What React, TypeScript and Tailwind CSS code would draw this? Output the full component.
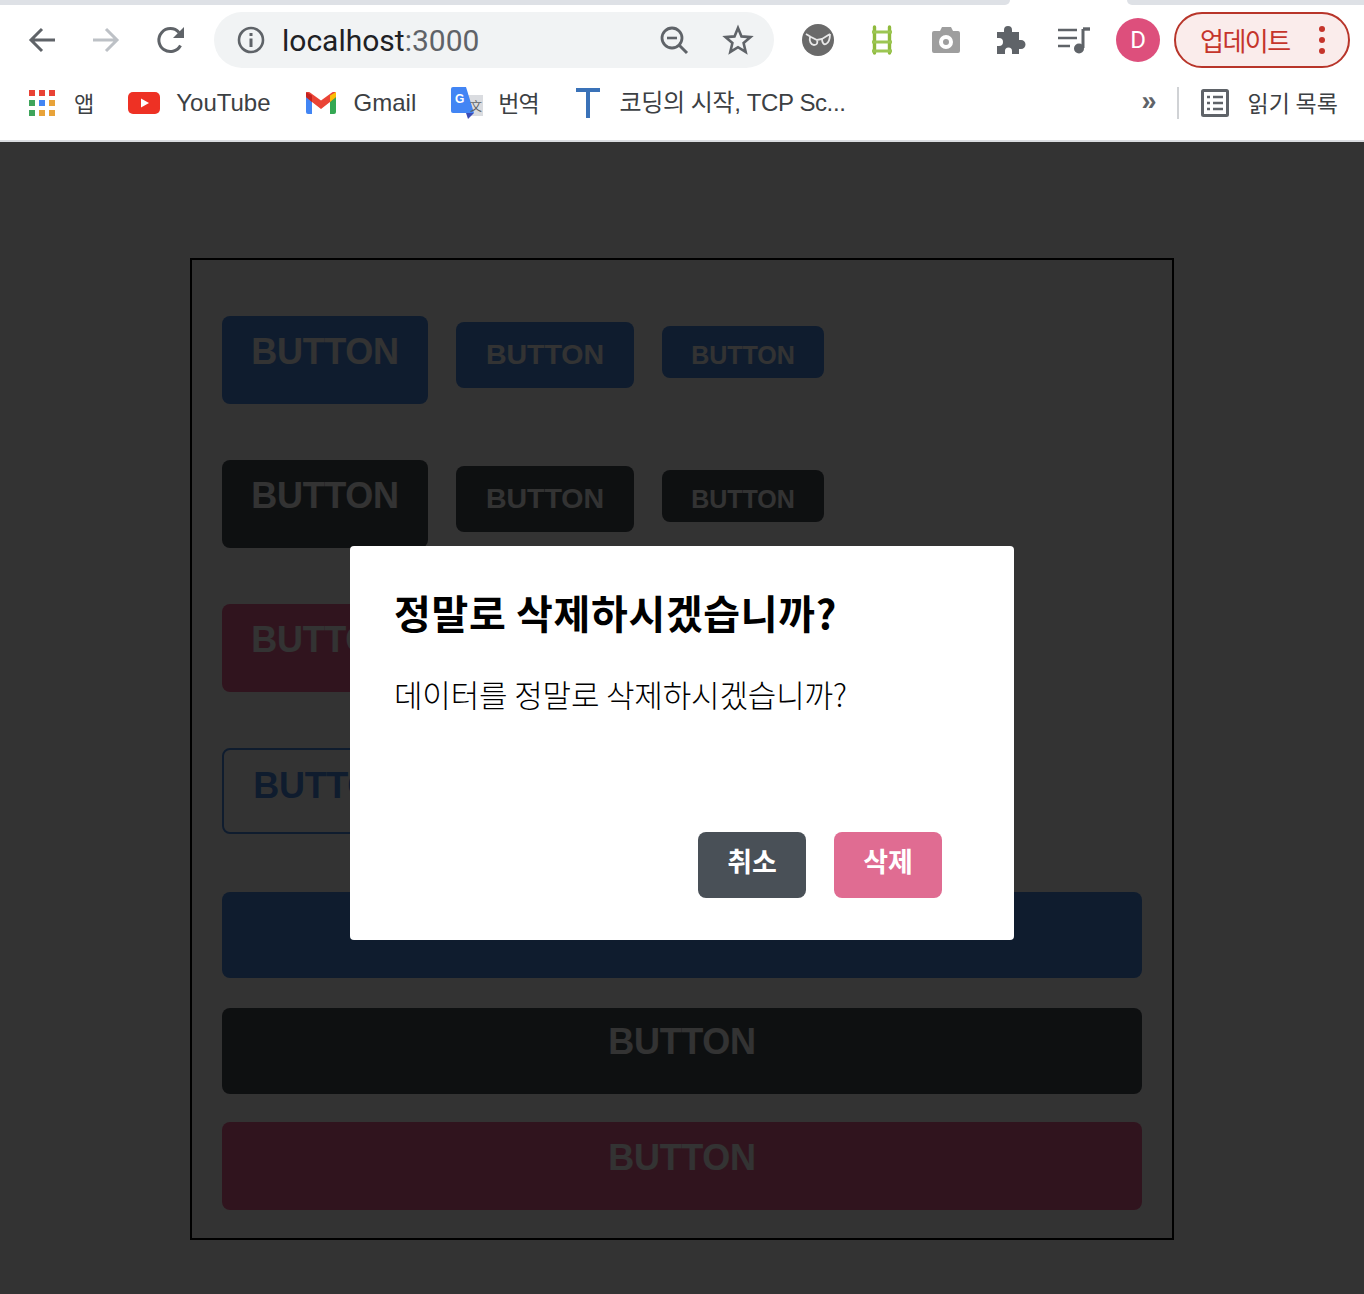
import { ReactNode } from "react";

const SANS = "font-['Liberation_Sans','Noto_Sans_CJK_KR',sans-serif]";

function ToolIcon({ className, children }: { className: string; children: ReactNode }) {
  return (
    <svg viewBox="0 0 32 32" className={`shrink-0 ${className}`} fill="none">
      {children}
    </svg>
  );
}

function BrowserChrome() {
  return (
    <header className="h-[142px] bg-white border-b-2 border-[#dadce0] text-[#3c4043]">
      {/* Tab strip */}
      <div className="flex h-[5px]">
        <div className="w-[1010px] bg-[#dee1e6] rounded-br-lg" />
        <div className="w-[117px]" />
        <div className="flex-1 bg-[#dee1e6] rounded-bl-lg" />
      </div>

      {/* Toolbar */}
      <div className="flex items-center h-[70px] pl-[26px]">
        <ToolIcon className="w-8 h-8">
          <path d="M29 16H6M16 5 5 16l11 11" stroke="#5f6368" strokeWidth="3" />
        </ToolIcon>
        <ToolIcon className="w-8 h-8 ml-[32px]">
          <path d="M3 16h23M16 5l11 11-11 11" stroke="#bdc1c6" strokeWidth="3" />
        </ToolIcon>
        <ToolIcon className="w-8 h-8 ml-[33px]">
          <path d="M25.5 21.5A11.5 11.5 0 1 1 24 8.5" stroke="#5f6368" strokeWidth="3" />
          <path d="M29 3v11H18z" fill="#5f6368" />
        </ToolIcon>

        <div className="flex items-center w-[560px] h-14 ml-[27px] pl-[21px] rounded-full bg-[#f1f3f4]">
          <ToolIcon className="w-8 h-8">
            <circle cx="16" cy="16" r="12" stroke="#5f6368" strokeWidth="2.6" />
            <path d="M16 14.5V23" stroke="#5f6368" strokeWidth="3" />
            <path d="M16 9v3" stroke="#5f6368" strokeWidth="3" />
          </ToolIcon>
          <span className="ml-[15px] mt-px text-[30px] leading-none text-[#202124] font-['Roboto',sans-serif]">
            localhost<span className="text-[#5f6368]">:3000</span>
          </span>
          <ToolIcon className="w-8 h-8 ml-auto">
            <circle cx="14" cy="14" r="10" stroke="#5f6368" strokeWidth="2.8" />
            <path d="m21 21 8 8" stroke="#5f6368" strokeWidth="3" />
            <path d="M9 14h10" stroke="#5f6368" strokeWidth="2.6" />
          </ToolIcon>
          <ToolIcon className="w-8 h-8 ml-[32px] mr-[20px]">
            <path
              d="m16 4 3.5 8.4 9 .7-6.9 5.9 2.1 8.9-7.7-4.7-7.7 4.7 2.1-8.9L3.500 13.100l9-.7z"
              stroke="#5f6368"
              strokeWidth="2.6"
            />
          </ToolIcon>
        </div>

        {/* Extensions */}
        <ToolIcon className="w-8 h-8 ml-[28px]">
          <circle cx="16" cy="16" r="16" fill="#6a6a6a" />
          <path
            d="M4 10l5 3 6 3 5-1 8-5M8 13c-1 4 1 8 4 8s4-2 3-5M20 15c0 4 2 6 4 5s4-4 4-10"
            stroke="#e8e8e8"
            strokeWidth="1.800"
          />
        </ToolIcon>
        <ToolIcon className="w-8 h-8 ml-[32px]">
          <path d="M8.500 3v26M23.500 3v26" stroke="#8fba3c" strokeWidth="3.400" strokeLinecap="round" />
          <path d="M6 8h20M6 18h20M6 27h20" stroke="#9cc653" strokeWidth="3" />
        </ToolIcon>
        <ToolIcon className="w-8 h-8 ml-[32px]">
          <path
            fillRule="evenodd"
            d="M12 3h9l2 4h5a2 2 0 0 1 2 2v18a2 2 0 0 1-2 2H4a2 2 0 0 1-2-2V9a2 2 0 0 1 2-2h6zM16 11a7 7 0 1 0 0 14 7 7 0 0 0 0-14zm0 4a3 3 0 1 1 0 6 3 3 0 0 1 0-6z"
            fill="#9e9e9e"
          />
        </ToolIcon>
        <ToolIcon className="w-8 h-8 ml-[32px]">
          <path
            d="M3 8h7V6a4 4 0 0 1 8 0v2h7v8h2a4.500 4.500 0 0 1 0 9h-2v5h-7v-3a3.500 3.500 0 0 0-7 0v3H3v-8h2a4 4 0 0 0 0-8H3z"
            fill="#5f6368"
          />
        </ToolIcon>
        <ToolIcon className="w-8 h-8 ml-[32px]">
          <path d="M0 6h19M0 14h19M0 22h12" stroke="#5f6368" strokeWidth="2.600" />
          <path d="M25 5v19" stroke="#5f6368" strokeWidth="3" />
          <path d="M25 5h7" stroke="#5f6368" strokeWidth="3.400" />
          <circle cx="21" cy="24.500" r="5" fill="#5f6368" />
        </ToolIcon>

        <div className="flex items-center justify-center w-11 h-11 ml-[26px] rounded-full bg-[#dd4f7c] text-white text-[24px] font-['Roboto',sans-serif]">
          D
        </div>
        <div className="flex items-center w-[176px] h-14 ml-[14px] pl-[24px] rounded-full border-2 border-[#b8352a] bg-[#faeceb] text-[#c5352b]">
          <span className="text-[26px] leading-none tracking-[-1.5px] font-['Noto_Sans_CJK_KR',sans-serif]">업데이트</span>
          <span className="flex flex-col gap-[5px] ml-auto mr-[23px]">
            <i className="block w-[6px] h-[6px] rounded-full bg-[#c5352b]" />
            <i className="block w-[6px] h-[6px] rounded-full bg-[#c5352b]" />
            <i className="block w-[6px] h-[6px] rounded-full bg-[#c5352b]" />
          </span>
        </div>
      </div>

      {/* Bookmarks */}
      <div className={`flex items-center h-[56px] pl-[29px] text-[24px] leading-none ${SANS}`}>
        <div className="grid grid-cols-3 gap-[4px] w-[26px] shrink-0">
          <i className="h-[6px] bg-[#e94235]" />
          <i className="h-[6px] bg-[#e94235]" />
          <i className="h-[6px] bg-[#e94235]" />
          <i className="h-[6px] bg-[#3fa45b]" />
          <i className="h-[6px] bg-[#4285f4]" />
          <i className="h-[6px] bg-[#e8a33a]" />
          <i className="h-[6px] bg-[#3fa45b]" />
          <i className="h-[6px] bg-[#e8a33a]" />
          <i className="h-[6px] bg-[#e8a33a]" />
        </div>
        <span className="ml-[19px] mb-[2px] font-['Noto_Sans_CJK_KR',sans-serif] text-[22px]">앱</span>

        <svg viewBox="0 0 32 22" className="w-8 h-[22px] ml-[34px] shrink-0">
          <rect width="32" height="22" rx="5" fill="#ee3124" />
          <path d="m13 6.500 8 4.500-8 4.500z" fill="#fff" />
        </svg>
        <span className="ml-[16px]">YouTube</span>

        <svg viewBox="0 0 30 22" className="w-[30px] h-[22px] ml-[35px] shrink-0">
          <path d="M0 2v18a2 2 0 0 0 2 2h4V8z" fill="#4285f4" />
          <path d="M30 2v18a2 2 0 0 1-2 2h-4V8z" fill="#34a853" />
          <path d="M0 2c0-2 2-3 4-1.500l11 8 11-8c2-1.500 4-.5 4 1.500v3l-6 5-9 7-9-7-6-5z" fill="#ea4335" />
          <path d="M24 3.500 30 0v5l-6 5z" fill="#fbbc04" />
          <path d="M0 0v5l6 5V3.500z" fill="#c5221f" />
        </svg>
        <span className="ml-[18px]">Gmail</span>

        <svg viewBox="0 0 32 32" className="w-8 h-8 ml-[35px] shrink-0">
          <path d="M14 8h18v21H20z" fill="#dadce0" />
          <path d="M2 0h13l8 26H2a2 2 0 0 1-2-2V2a2 2 0 0 1 2-2z" fill="#4285f4" />
          <path d="m15 26 8 0-6 6z" fill="#3b4cb8" />
          <text x="4" y="16" fontSize="12" fontWeight="700" fill="#fff" fontFamily="Liberation Sans">G</text>
          <text x="19" y="24" fontSize="12" fill="#5f6368" fontFamily="Noto Sans CJK SC">文</text>
        </svg>
        <span className="ml-[15px] mb-[2px] font-['Noto_Sans_CJK_KR',sans-serif] text-[23px] tracking-[-1px]">번역</span>

        <svg viewBox="0 0 24 32" className="w-6 h-8 ml-[37px] shrink-0">
          <path d="M0 1h24v4H14v26h-4V5H0z" fill="#3a72b8" />
        </svg>
        <span className="ml-[20px] tracking-[-0.4px]">코딩의 시작, TCP Sc...</span>

        <span className="ml-auto text-[27px] font-bold text-[#5f6368] mb-[3px]">»</span>
        <i className="block w-[2px] h-8 ml-[21px] bg-[#d0d2d5]" />
        <svg viewBox="0 0 28 28" className="w-7 h-7 ml-[22px] shrink-0" fill="none">
          <rect x="1.500" y="1.500" width="25" height="25" rx="1" stroke="#5f6368" strokeWidth="3" />
          <path d="M6 8h3M12 8h10M6 14h3M12 14h10M6 20h3M12 20h10" stroke="#5f6368" strokeWidth="2.400" />
        </svg>
        <span className="ml-[18px] mr-[26px] mb-px font-['Noto_Sans_CJK_KR',sans-serif] text-[23px] tracking-[0.15px]">읽기 목록</span>
      </div>
    </header>
  );
}

const LARGE = "w-[206px] h-[88px] pt-[14px] text-[36px] tracking-[-0.3px] leading-[44px] rounded-lg";
const MEDIUM = "w-[178px] h-[66px] pt-[15px] text-[28.5px] leading-[34px] rounded-lg";
const SMALL = "w-[162px] h-[52px] pt-[14px] text-[25px] leading-[30px] rounded-lg";

function ButtonRow({ color }: { color: string }) {
  return (
    <div className="flex items-baseline gap-7">
      <div className={`${LARGE} ${color} text-center font-bold`}>BUTTON</div>
      <div className={`${MEDIUM} ${color} text-center font-bold`}>BUTTON</div>
      <div className={`${SMALL} ${color} text-center font-bold`}>BUTTON</div>
    </div>
  );
}

function ButtonSheet() {
  return (
    <main className="flex justify-center pt-[116px] pb-[54px] bg-white">
      <div className={`flex flex-col w-[984px] h-[982px] pt-[56px] px-[30px] border-2 border-black text-white ${SANS}`}>
        <ButtonRow color="bg-[#4b8ce6]" />
        <div className="mt-[56px]">
          <ButtonRow color="bg-[#495057]" />
        </div>
        <div className="mt-[56px]">
          <ButtonRow color="bg-[#f06595]" />
        </div>
        <div className="mt-[56px] flex items-center gap-7">
          <div className="w-[206px] h-[86px] pt-[14px] pl-[4px] text-[36px] tracking-[-0.3px] leading-[44px] rounded-lg border-2 border-[#4b8ce6] text-[#4b8ce6] text-center font-bold">
            BUTTON
          </div>
        </div>
        <div className="mt-[58px] h-[86px] rounded-lg bg-[#4b8ce6] pt-[14px] text-[36px] tracking-[-0.3px] leading-[44px] text-center font-bold">
          BUTTON
        </div>
        <div className="mt-[30px] h-[86px] rounded-lg bg-[#495057] pt-[12px] text-[36px] tracking-[-0.3px] leading-[44px] text-center font-bold">
          BUTTON
        </div>
        <div className="mt-[28px] h-[88px] rounded-lg bg-[#f06595] pt-[14px] text-[36px] tracking-[-0.3px] leading-[44px] text-center font-bold">
          BUTTON
        </div>
      </div>
    </main>
  );
}

function ConfirmDialog() {
  return (
    <div className="absolute top-[142px] inset-x-0 bottom-0 bg-black/80 flex justify-center pt-[404px]">
      <div className="w-[664px] h-[394px] pt-[42px] pl-[44px] rounded bg-white text-black font-['Noto_Sans_CJK_KR',sans-serif]">
        <h3 className="text-[40px] leading-[48px] font-bold tracking-[0.65px]">정말로 삭제하시겠습니까?</h3>
        <p className="mt-[39px] text-[31px] leading-[38px] font-light tracking-[-0.15px]">데이터를 정말로 삭제하시겠습니까?</p>
        <div className="flex justify-end gap-7 mt-[119px] mr-[72px]">
          <div className="w-[108px] h-[66px] pt-[9px] rounded-lg bg-[#495057] text-white text-center text-[27px] leading-[40px] font-bold">
            취소
          </div>
          <div className="w-[108px] h-[66px] pt-[9px] rounded-lg bg-[#e06c92] text-white text-center text-[27px] leading-[40px] font-bold">
            삭제
          </div>
        </div>
      </div>
    </div>
  );
}

export default function App() {
  return (
    <div className="relative w-[1364px] h-[1294px] overflow-hidden bg-white">
      <BrowserChrome />
      <ButtonSheet />
      <ConfirmDialog />
    </div>
  );
}
